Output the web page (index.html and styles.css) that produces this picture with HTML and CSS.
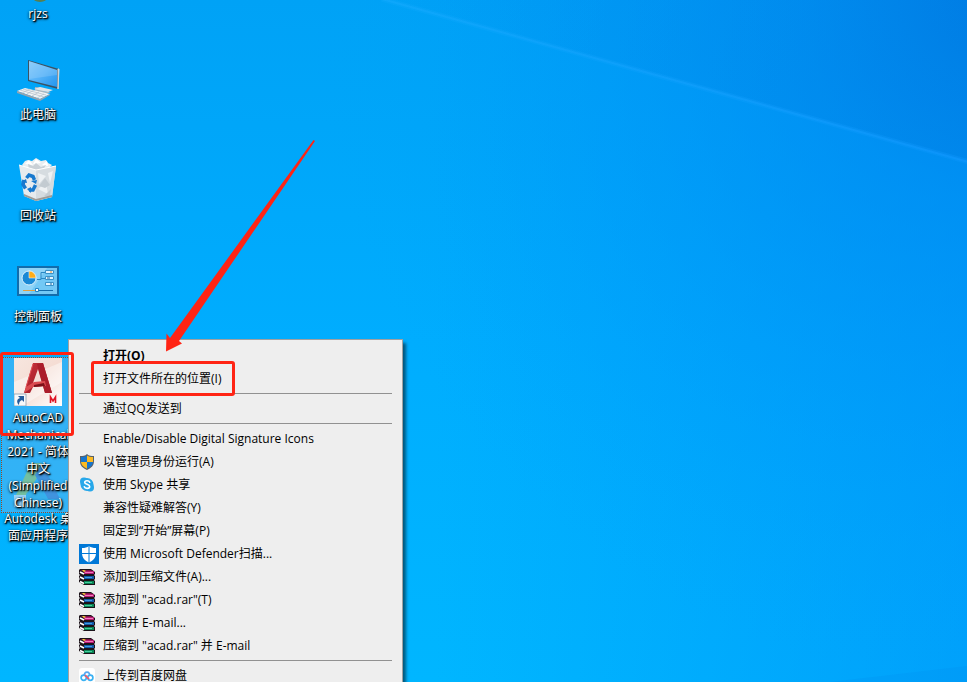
FILE: index.html
```html
<!DOCTYPE html>
<html lang="zh-CN">
<head>
<meta charset="utf-8">
<title>桌面</title>
<link rel="stylesheet" href="styles.css">
</head>
<body>
<main class="desktop">
  <svg class="wallpaper" viewBox="0 0 967 682" preserveAspectRatio="none" aria-hidden="true">
    <defs>
      <linearGradient id="sky" x1="0" y1="0" x2="0" y2="1">
        <stop offset="0" stop-color="#00a2f6"/><stop offset=".5" stop-color="#00adfe"/><stop offset="1" stop-color="#00b6ff"/>
      </linearGradient>
      <radialGradient id="dusk" gradientUnits="userSpaceOnUse" cx="1010" cy="-10" r="700">
        <stop offset="0" stop-color="#007ee6"/><stop offset=".3" stop-color="#008af0" stop-opacity=".6"/><stop offset=".65" stop-color="#0094f6" stop-opacity=".28"/><stop offset="1" stop-color="#00a2fa" stop-opacity="0"/>
      </radialGradient>
      <linearGradient id="edge" x1="0" y1="0" x2="1" y2="0">
        <stop offset=".45" stop-color="#0094f8" stop-opacity="0"/><stop offset="1" stop-color="#0090f8" stop-opacity=".55"/>
      </linearGradient>
      <linearGradient id="ray" x1="0" y1="0" x2="1" y2="0">
        <stop offset="0" stop-color="#18acff" stop-opacity=".7"/><stop offset="1" stop-color="#1098ff"/>
      </linearGradient>
      <linearGradient id="shade" x1="0" y1="0" x2="1" y2="0">
        <stop offset="0" stop-color="#0072d8" stop-opacity="0"/><stop offset="1" stop-color="#0072d8" stop-opacity=".25"/>
      </linearGradient>
    </defs>
    <path fill="url(#sky)" d="M0 0h967v682H0z"/>
    <path fill="url(#edge)" d="M0 0h967v682H0z"/>
    <path fill="url(#dusk)" d="M0 0h967v682H0z"/>
    <path fill="url(#shade)" d="M384 0h583v162z"/>
    <path fill="none" stroke="url(#ray)" stroke-width="5" stroke-opacity=".3" d="M382 -1 969 162"/>
    <path fill="none" stroke="url(#ray)" stroke-width="2" stroke-opacity=".6" d="M382 -1 969 162"/>
    <path fill="#0090f0" fill-opacity=".25" d="M830 682 967 666v16z"/>
  </svg>

  <ul class="icons">
    <li class="icon">
      <svg viewBox="0 0 48 48"><ellipse cx="26" cy="42" rx="8" ry="6" fill="#557f52"/></svg>
      <span class="label">rjzs</span>
    </li>
    <li class="icon">
      <svg viewBox="0 0 48 48">
        <defs><linearGradient id="scr" x1="0" y1="0" x2="1" y2="1"><stop offset="0" stop-color="#7cc6fa"/><stop offset=".5" stop-color="#55b2f8"/><stop offset="1" stop-color="#2295ee"/></linearGradient></defs>
        <path d="m21 32 9 1-1 3 8 1-5 2-11-2z" fill="#aab6bf"/>
        <path d="m20 34 6-2 13 3-5 2z" fill="#dfe4e8"/>
        <path d="m14 5 31 9-1 20-30-8z" fill="#3d5262"/>
        <path d="m45 14-1 20V14z" fill="#cfd8de" stroke="#cfd8de"/>
        <path d="m15 6 28 9v17l-28-7z" fill="url(#scr)"/>
        <path d="M15 6 43 15v5L15 24z" fill="#fff" fill-opacity=".14"/>
        <path d="m3 36 8-3 25 6-10 5z" fill="#f1f3f5"/>
        <path d="m3 36 23 8 10-5v1l-10 6-23-8z" fill="#94a3af"/>
        <path d="m6 35 24 7M9 34l23 6M8 38l8-4M13 39l7-4M18 41l7-4M23 43l7-4" stroke="#b3bfc8" stroke-width=".7"/>
      </svg>
      <span class="label">此电脑</span>
    </li>
    <li class="icon">
      <svg viewBox="0 0 48 48">
        <path d="m8 9 3-4 3-1 4 1 4-3 5 3 5-1 2 3 4 2-5 5H12z" fill="#e9edf0"/>
        <path d="m11 8 4-4 4 5zM19 8l3-5 5 4zM28 9l5-4 1 5z" fill="#fff"/>
        <path d="m14 8 5 2 3-3 5 4 5-2-3 5H15z" fill="#c9d0d6"/>
        <path d="m5 9 17 5 20-4-4 31-16 4-12-5z" fill="#e7ebee"/>
        <path d="m22 14 20-4-4 31-16 4z" fill="#d6dce0"/>
        <path d="m5 9 17 5 20-4" fill="none" stroke="#fff"/>
        <path d="m24 17 8 3-7 8zM34 17l5-2-3 12zM24 33l8-6 2 11z" fill="#eef1f3"/>
        <path d="m25 30 6-8 5 7-5 3zM30 40l7-7-1 7z" fill="#c3cbd1"/>
        <path d="m10 40 12 5 16-4v-2l-16 4-12-5z" fill="#9f9c97"/>
        <g fill="none" stroke="#1879ce" stroke-width="3.500"><path d="m12.500 22 2.500-3 4 1.500 1.500 3.500"/><path d="m10 24-1 4.500 2.500 4"/><path d="m15 34 4 0 2.500-5"/></g>
        <path d="m17 25 6-1-1 4zM7 26l5-3 1 4zM17 31v6l-4-4z" fill="#1879ce"/>
      </svg>
      <span class="label">回收站</span>
    </li>
    <li class="icon">
      <svg viewBox="0 0 48 48">
        <path d="M3 9h42v30H3z" fill="#126cab"/><path d="M5 11h38v26H5z" fill="#72c8f5"/><path d="M5 11h28L15 37H5z" fill="#a5dcf9" fill-opacity=".6"/>
        <circle cx="15" cy="21" r="7" fill="#1989d5" stroke="#dff3fd"/><path d="M15 21V14a7 7 0 0 1 7 7z" fill="#ffad18" stroke="#e5f5ff" stroke-width=".6"/>
        <path d="M23 22.500h4v-7h4M27 21.500h4" fill="none" stroke="#2a88c4"/>
        <path d="M31.500 13.500h8v3h-8zM31.500 19.500h8v3h-8zM31.500 25.500h8v3h-8z" fill="#e4f4fd" stroke="#3b92c8"/>
        <path d="M36 15h2" stroke="#f78b22"/><path d="M33 21h3M36 27h2" stroke="#16679f"/>
        <path d="M9 33.500h12" stroke="#e4a042"/><path d="M23 33.500h16" stroke="#136cab"/><path d="M21.500 31.500h3v3h-3z" fill="#fff" stroke="#2385c5"/>
      </svg>
      <span class="label">控制面板</span>
    </li>
    <li class="icon selected">
      <svg viewBox="0 0 48 48">
        <defs>
          <linearGradient id="tile" x1="0" y1="0" x2="1" y2="1"><stop offset="0" stop-color="#f7e6df"/><stop offset=".5" stop-color="#f5ddd4"/><stop offset="1" stop-color="#fff"/></linearGradient>
          <linearGradient id="red" x1="0" y1="0" x2="1" y2="1"><stop offset="0" stop-color="#c5303a"/><stop offset="1" stop-color="#9d1823"/></linearGradient>
        </defs>
        <path d="M0 0h48v48H0z" fill="url(#tile)"/>
        <path d="M0 24 48 4v20L8 48H0z" fill="#fff" fill-opacity=".4"/>
        <path d="m10 35 9-30h10l9 30h-7l-2-7-10 1-3 6z" fill="url(#red)"/>
        <path d="M24 11 19 25h9z" fill="#f4ded7"/>
        <path d="M29 5 38 35h-7L23 6z" fill="#ab1d2b"/>
        <path d="m12 29 8-5 11-1 1 5-13 1-9 6z" fill="#db4b50"/>
        <path d="M19 6 12 29" stroke="#e2545a"/>
        <path d="M20 27 30 25l1 3-11 1z" fill="#7c1019"/>
        <path d="M36.500 45v-6l2.500 4 2.500-4v6" fill="none" stroke="#df1525" stroke-width="1.600"/>
        <path d="M0 36h12v12H0z" fill="#f7f9fb" stroke="#8e9daa" stroke-width=".8"/>
        <path d="m4 38 6 0v6l-2-2c-2 1-3 2-3 5-3-3-2-6 1-7z" fill="#235b9b"/>
      </svg>
      <span class="label">AutoCAD<br>Mechanical<br>2021 - 简体<br>中文<br>(Simplified<br>Chinese)</span>
    </li>
    <li class="icon">
      <svg viewBox="0 0 48 48">
        <path d="M2 36 17 4h11l-2 10L12 36z" fill="#a4d32e"/><path d="M28 4 46 40H34L21 16z" fill="#2463c4"/><path d="M12 34 24 26l10 14H12z" fill="#12a3c9" fill-opacity=".5"/><path d="M0 36h12v12H0z" fill="#fff"/><path d="m4 38 6 0v6l-2-2c-2 1-3 2-3 5-3-3-2-6 1-7z" fill="#5792c5"/>
      </svg>
      <span class="label">Autodesk 桌<br>面应用程序</span>
    </li>
  </ul>

  <svg class="defs" aria-hidden="true">
    <symbol id="rar" viewBox="0 0 16 16">
      <path d="M1 0h11l4 3v2l-1 1 1 1v3l-1 1 1 1v4H5l-5-3v-2l1-1-1-1V7l1-1-1-1V1z" fill="#1b1219"/>
      <path d="M1 1h11l3 2H5z" fill="#7a1045"/><path d="M5 2h10v3H5z" fill="#b51a72"/><path d="M6 3.500h8" stroke="#ee7abb"/>
      <path d="m1 3 4 2M1 8l4 2M1 12.500l4 2" stroke="#fff" stroke-width="1.800"/>
      <path d="M5 7h10v3H5z" fill="#125aa8"/><path d="M6 8.500h7" stroke="#3f9be0"/>
      <path d="M5 12h10v3H5z" fill="#0a8554"/><path d="M6 13.500h7" stroke="#45cca0"/>
      <path d="m3 1 2 2 2-1-2-1z" fill="#eed337"/>
    </symbol>
  </svg>

  <nav class="menu" aria-label="快捷菜单">
    <button class="item default"><span class="glyph"></span>打开(O)</button>
    <button class="item"><span class="glyph"></span>打开文件所在的位置(I)</button>
    <hr>
    <button class="item"><span class="glyph"></span>通过QQ发送到</button>
    <hr>
    <button class="item"><span class="glyph"></span>Enable/Disable Digital Signature Icons</button>
    <button class="item"><span class="glyph"><svg class="small" viewBox="0 0 16 16">
      <path d="M8 0c2 2 4 2 7 2v5c0 5-3 7-7 9-4-2-7-4-7-9V2c3 0 5 0 7-2z" fill="#56616b"/>
      <path d="M8 1.500V8H2V3c3 0 4-.3 6-1.500z" fill="#1675ce"/><path d="M8 1.500C10 2.700 11 3 14 3v5H8z" fill="#fcba22"/><path d="M2 8h6v6.700C4 13 2.300 11 2 8z" fill="#fcba22"/><path d="M8 8h6c-.3 3-2 5-6 6.700z" fill="#1675ce"/>
    </svg></span>以管理员身份运行(A)</button>
    <button class="item"><span class="glyph"><svg class="small" viewBox="0 0 16 16">
      <circle cx="8" cy="7.500" r="6.500" fill="#28a8ea"/><circle cx="5" cy="4.500" r="4" fill="#28a8ea"/><circle cx="11" cy="10.500" r="4" fill="#28a8ea"/>
      <path d="M10.700 5.200C10 3.300 5.700 3.300 5.700 5.500c0 2.300 5 1.400 5 4 0 2.500-4.700 2.400-5.400.3" fill="none" stroke="#fff" stroke-width="1.600" stroke-linecap="round"/>
    </svg></span>使用 Skype 共享</button>
    <button class="item"><span class="glyph"></span>兼容性疑难解答(Y)</button>
    <button class="item"><span class="glyph"></span>固定到“开始”屏幕(P)</button>
    <button class="item"><span class="glyph"><svg class="large" viewBox="0 0 20 20">
      <path d="M0 0h20v20H0z" fill="#0078d7"/><path d="M10 2c2 1.500 4 2 7 2v5c0 5-3 7.500-7 9.500C6 16.500 3 14 3 9V4c3 0 5-.5 7-2z" fill="#fff"/><path d="M10 2v17M3 9.500h14" stroke="#0078d7"/>
    </svg></span>使用 Microsoft Defender扫描...</button>
    <button class="item"><span class="glyph"><svg class="small" viewBox="0 0 16 16"><use href="#rar"/></svg></span>添加到压缩文件(A)...</button>
    <button class="item"><span class="glyph"><svg class="small" viewBox="0 0 16 16"><use href="#rar"/></svg></span>添加到 "acad.rar"(T)</button>
    <button class="item"><span class="glyph"><svg class="small" viewBox="0 0 16 16"><use href="#rar"/></svg></span>压缩并 E-mail...</button>
    <button class="item"><span class="glyph"><svg class="small" viewBox="0 0 16 16"><use href="#rar"/></svg></span>压缩到 "acad.rar" 并 E-mail</button>
    <hr>
    <button class="item"><span class="glyph"><svg class="small" viewBox="0 0 16 16">
      <rect width="16" height="16" rx="3" fill="#fff"/><g fill="none" stroke-width="1.700"><circle cx="4.700" cy="9.700" r="2.600" stroke="#3bb2f3"/><circle cx="11.300" cy="9.700" r="2.600" stroke="#3bb2f3"/><path d="M5.400 7.500a2.700 2.700 0 1 1 5.200 0" stroke="#55a8f2"/><path d="m6 7.200 4 4" stroke="#f15b6c"/></g>
    </svg></span>上传到百度网盘</button>
  </nav>

  <div class="callout callout-shortcut" aria-hidden="true"></div>
  <div class="callout callout-command" aria-hidden="true"></div>
  <svg class="arrow" viewBox="0 0 152 214" aria-hidden="true"><path d="M148.500 0 150 1 14 201 17 203.500 1 211.500 1.500 193.500 5 198z" fill="#ff2414"/></svg>
</main>
</body>
</html>
```
FILE: styles.css
```css
*,
*::before {
  box-sizing: border-box;
}

body {
  margin: 0;
  font: 12px/17px "Open Sans", "Noto Sans CJK SC", sans-serif;
}

.desktop {
  position: relative;
  height: 100vh;
  overflow: hidden;
  background: #00a8fb;
}

.wallpaper {
  position: absolute;
  inset: 0;
  width: 100%;
  height: 100%;
}

.defs {
  position: absolute;
  width: 0;
  height: 0;
}

.icons {
  position: relative;
  display: flex;
  flex-direction: column;
  width: 76px;
  margin: -46px 0 0;
  padding: 0;
  list-style: none;
}

.icon {
  display: flex;
  flex-direction: column;
  align-items: center;
  gap: 3px;
  height: 101px;
}

.icon svg {
  flex: none;
  width: 48px;
  height: 48px;
}

.label {
  color: #fff;
  text-align: center;
  white-space: nowrap;
  text-shadow: 1px 1px 1px #000, 1px 1px 2px #000, 0 1px 3px #000;
}

.selected {
  position: relative;
  z-index: 1;
}

.selected::before {
  content: "";
  position: absolute;
  inset: -1px 0 auto 1px;
  z-index: -1;
  height: 156px;
  border: 1px dotted #914a2c;
  background: rgba(84, 180, 240, .6);
}

/* Context menu */
.menu {
  position: absolute;
  top: 339px;
  left: 68px;
  z-index: 2;
  width: 335px;
  padding: 4px 0;
  border: 1px solid #a0a0a0;
  background: #eee;
  box-shadow: 3px 4px 3px rgba(0, 0, 0, .5);
}

.item {
  display: flex;
  align-items: center;
  width: 100%;
  height: 23px;
  padding: 0 10px;
  border: 0;
  background: none;
  color: #000;
  font: inherit;
  text-align: left;
  white-space: nowrap;
}

.default { font-weight: 700; }

.glyph {
  display: flex;
  flex: none;
  width: 24px;
}

.small {
  width: 16px;
  height: 16px;
}

.large {
  width: 20px;
  height: 20px;
}

.menu hr {
  height: 1px;
  margin: 3px 10px;
  border: 0;
  background: #919191;
}

/* Red annotations */
.callout {
  position: absolute;
  z-index: 3;
  border: 3px solid #ff2414;
  border-radius: 3px;
}

.callout-shortcut {
  top: 352px;
  left: 0;
  width: 74px;
  height: 84px;
}

.callout-command {
  top: 361px;
  left: 91px;
  width: 144px;
  height: 35px;
}

.arrow {
  position: absolute;
  top: 140px;
  left: 165px;
  z-index: 3;
  width: 152px;
  height: 214px;
}
```
